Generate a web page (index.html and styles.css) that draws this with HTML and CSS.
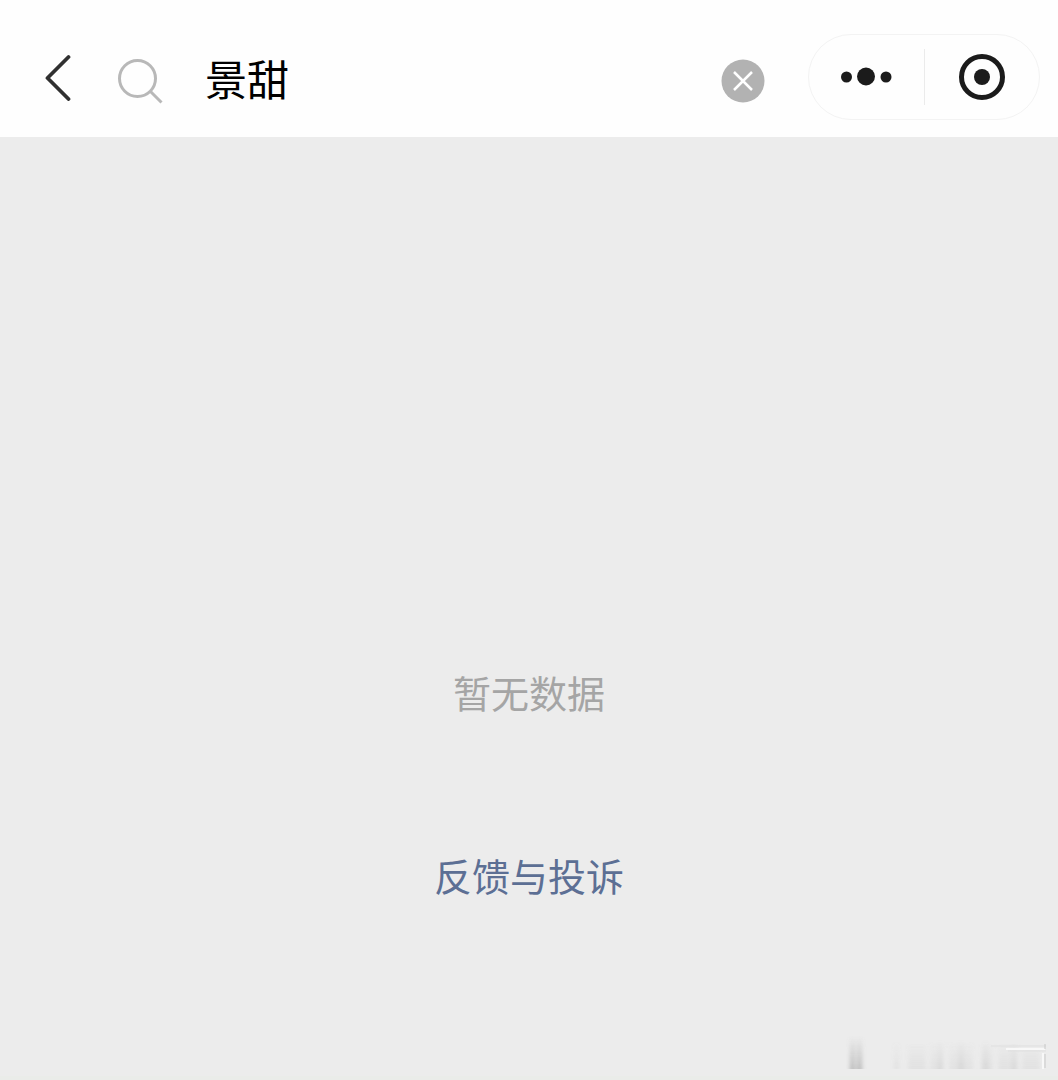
FILE: index.html
```html
<!DOCTYPE html>
<html lang="zh-CN">
<head>
<meta charset="utf-8">
<meta name="viewport" content="width=device-width, initial-scale=1">
<title>搜索</title>
<link rel="stylesheet" href="styles.css">
</head>
<body>
<header class="bar">
  <button class="icon-button back" type="button" aria-label="返回">
    <svg width="28" height="48" viewBox="0 0 28 48" fill="none" stroke="#303030" stroke-width="3.8" stroke-linecap="round" stroke-linejoin="round"><path d="M24.500 4 3.500 25 24.500 46"/></svg>
  </button>
  <form class="search" role="search">
    <label class="search-label" for="query" aria-label="搜索">
      <svg width="48" height="48" viewBox="0 0 48 48" fill="none" stroke="#b8b8b8" stroke-width="3"><circle cx="21.500" cy="21.500" r="18"/><path d="M34.500 34.500 45.500 45.500"/></svg>
    </label>
    <input class="query" id="query" type="text" value="景甜">
    <button class="icon-button" type="reset" aria-label="清除">
      <svg width="44" height="44" viewBox="0 0 44 44"><circle cx="22" cy="22" r="21.500" fill="#b2b2b2"/><path d="M13 13 31 31M31 13 13 31" fill="none" stroke="#fff" stroke-width="2.500"/></svg>
    </button>
  </form>
  <div class="capsule">
    <button class="icon-button capsule-button" type="button" aria-label="更多">
      <svg width="52" height="24" viewBox="0 0 52 24" fill="#1b1b1b"><circle cx="6.500" cy="12" r="5.500"/><circle cx="26" cy="11.500" r="9"/><circle cx="46" cy="12" r="5.500"/></svg>
    </button>
    <span class="divider"></span>
    <button class="icon-button capsule-button" type="button" aria-label="关闭">
      <svg width="48" height="48" viewBox="0 0 48 48"><circle cx="24" cy="24" r="20.500" fill="none" stroke="#1b1b1b" stroke-width="5"/><circle cx="24" cy="24" r="8" fill="#1b1b1b"/></svg>
    </button>
  </div>
</header>
<main class="results">
  <p class="empty">暂无数据</p>
  <a class="feedback" href="#feedback">反馈与投诉</a>
  <svg class="smudge" width="204" height="36" viewBox="0 0 204 36" aria-hidden="true">
    <defs>
      <linearGradient id="fade" x1="0" y1="0" x2="0" y2="1"><stop offset="0" stop-color="#888" stop-opacity="0"/><stop offset="1" stop-color="#888" stop-opacity="1"/></linearGradient>
      <filter id="soft" x="-10%" y="-10%" width="120%" height="120%"><feGaussianBlur stdDeviation="2 0.300"/></filter>
    </defs>
    <g fill="url(#fade)" filter="url(#soft)">
      <path opacity=".5" d="M4 0h5v33H4zM11 0h5v33h-5z"/>
      <path opacity=".1" d="M48 4h5v29h-5zM62 8h18v25H62zM84 4h14v29H84zM103 4h24v29h-24zM135 8h12v25h-12zM152 8h20v25h-20zM176 12h18v21h-18z"/>
      <path opacity=".12" d="M92 4h4v29h-4zM112 4h6v29h-6zM137 4h5v29h-5zM166 8h4v25h-4z"/>
    </g>
    <path d="M145 10h55M162 15h38" stroke="#dfdfdf" fill="none"/>
    <path d="M160 13h39M197 17v16" stroke="#f8f8f8" fill="none" stroke-width="2"/>
    <path d="M199 8v5M199 18v14" stroke="#c8c8c8" fill="none"/>
  </svg>
</main>
</body>
</html>
```
FILE: styles.css
```css
* {
  box-sizing: border-box;
}

body {
  display: flex;
  flex-direction: column;
  min-height: 100vh;
  margin: 0;
  background: #ececec;
  font-family: "Noto Sans CJK SC", sans-serif;
}

svg {
  display: block;
}

.bar {
  display: flex;
  align-items: center;
  padding: 34px 18px 17px 44px;
  background: #fefefe;
}

.icon-button {
  flex: none;
  padding: 0;
  border: 0;
  background: none;
  cursor: pointer;
}

.search {
  display: flex;
  flex: 1;
  align-items: center;
  min-width: 0;
  margin: 7px 43px 0 44px;
}

.search-label {
  flex: none;
}

.query {
  flex: 1;
  min-width: 0;
  height: 60px;
  margin: 0 16px 6px 41px;
  padding: 0;
  border: 0;
  outline: 0;
  background: none;
  color: #000;
  font: 42px/60px "Noto Sans CJK SC", sans-serif;
}

.capsule {
  display: flex;
  flex: none;
  align-items: center;
  width: 232px;
  height: 86px;
  border: 1px solid #f3f3f3;
  border-radius: 43px;
}

.capsule-button {
  display: flex;
  flex: 1;
  justify-content: center;
}

.divider {
  width: 1px;
  height: 56px;
  background: #ebebeb;
}

.results {
  position: relative;
  display: flex;
  flex: 1;
  flex-direction: column;
  align-items: center;
  padding-top: 527px;
  border-bottom: 4px solid #eaece9;
  font-size: 38px;
  line-height: 56px;
}

.empty {
  margin: 0 0 127px;
  color: #a5a5a5;
}

.feedback {
  color: #5c6f94;
  text-decoration: none;
}

.smudge {
  position: absolute;
  right: 8px;
  bottom: 4px;
}
```
